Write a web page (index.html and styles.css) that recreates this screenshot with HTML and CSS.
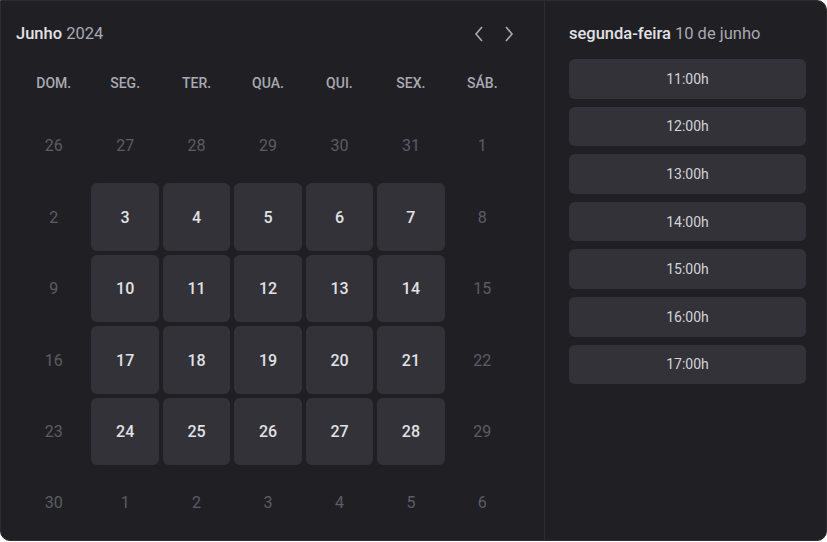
FILE: index.html
```html
<!DOCTYPE html>
<html lang="pt-BR">
<head>
<meta charset="utf-8">
<link rel="stylesheet" href="styles.css">
</head>
<body>
<div class="card">
  <section class="calendar">
    <header class="cal-header">
      <h2 class="cal-title">Junho <span>2024</span></h2>
      <div class="nav">
        <button class="nav-btn" aria-label="Anterior"><svg width="14" height="18" viewBox="0 0 14 18"><path d="M10 2 L4 9 L10 16" fill="none" stroke="currentColor" stroke-width="1.6"/></svg></button>
        <button class="nav-btn" aria-label="Próximo"><svg width="14" height="18" viewBox="0 0 14 18"><path d="M4 2 L10 9 L4 16" fill="none" stroke="currentColor" stroke-width="1.6"/></svg></button>
      </div>
    </header>
    <div class="weekdays">
      <span>DOM.</span><span>SEG.</span><span>TER.</span><span>QUA.</span><span>QUI.</span><span>SEX.</span><span>SÁB.</span>
    </div>
    <div class="days">
      <span class="day off">26</span><span class="day off">27</span><span class="day off">28</span><span class="day off">29</span><span class="day off">30</span><span class="day off">31</span><span class="day off">1</span>
      <span class="day off">2</span><span class="day on">3</span><span class="day on">4</span><span class="day on">5</span><span class="day on">6</span><span class="day on">7</span><span class="day off">8</span>
      <span class="day off">9</span><span class="day on">10</span><span class="day on">11</span><span class="day on">12</span><span class="day on">13</span><span class="day on">14</span><span class="day off">15</span>
      <span class="day off">16</span><span class="day on">17</span><span class="day on">18</span><span class="day on">19</span><span class="day on">20</span><span class="day on">21</span><span class="day off">22</span>
      <span class="day off">23</span><span class="day on">24</span><span class="day on">25</span><span class="day on">26</span><span class="day on">27</span><span class="day on">28</span><span class="day off">29</span>
      <span class="day off">30</span><span class="day off">1</span><span class="day off">2</span><span class="day off">3</span><span class="day off">4</span><span class="day off">5</span><span class="day off">6</span>
    </div>
  </section>
  <aside class="times">
    <h3 class="times-title">segunda-feira <span>10 de junho</span></h3>
    <div class="slots">
      <button class="slot">11:00h</button>
      <button class="slot">12:00h</button>
      <button class="slot">13:00h</button>
      <button class="slot">14:00h</button>
      <button class="slot">15:00h</button>
      <button class="slot">16:00h</button>
      <button class="slot">17:00h</button>
    </div>
  </aside>
</div>
</body>
</html>
```
FILE: styles.css
```css
* { box-sizing: border-box; }
html, body { margin: 0; padding: 0; }
body {
  background: #ffffff;
  font-family: Roboto, "Noto Sans", sans-serif;
  width: 827px;
  height: 542px;
  overflow: hidden;
}
.card {
  display: flex;
  width: 827px;
  height: 541px;
  background: #202024;
  border: 1px solid #2c2c31;
  border-radius: 0 10px 10px 10px;
  overflow: hidden;
}
.calendar {
  width: 544px;
  border-right: 1px solid #2c2c31;
  padding: 0 28px 0 19px;
  display: flex;
  flex-direction: column;
}
.cal-header {
  height: 65px;
  display: flex;
  align-items: center;
  justify-content: space-between;
  margin-left: -4px;
}
.cal-title {
  margin: 0;
  font-size: 16.5px;
  font-weight: 500;
  color: #e1e1e6;
}
.cal-title span { font-weight: 400; color: #a9a9b2; }
.nav { display: flex; gap: 16px; margin-right: 0; }
.nav-btn {
  background: none;
  border: 0;
  padding: 0;
  width: 14px;
  height: 18px;
  color: #a9a9b2;
  display: flex;
}
.weekdays {
  display: grid;
  grid-template-columns: repeat(7, 1fr);
  column-gap: 4px;
  height: 34px;
  align-items: center;
  margin-bottom: 12px;
}
.weekdays span {
  text-align: center;
  font-size: 14px;
  font-weight: 500;
  color: #a9a9b2;
}
.days {
  display: grid;
  grid-template-columns: repeat(7, 1fr);
  gap: 4px;
}
.day {
  aspect-ratio: 1 / 1;
  display: flex;
  align-items: center;
  justify-content: center;
  font-size: 16px;
  border-radius: 6px;
}
.day.off { color: #5c5c64; }
.day.on {
  background: #323238;
  color: #e1e1e6;
  font-weight: 500;
}
.times {
  flex: 1;
  padding: 0 20px 0 24px;
}
.times-title {
  margin: 0;
  height: 58px;
  display: flex;
  align-items: center;
  padding-top: 6px;
  font-size: 16.5px;
  font-weight: 500;
  color: #e1e1e6;
}
.times-title span { font-weight: 400; color: #a9a9b2; margin-left: 4px; }
.slots {
  display: flex;
  flex-direction: column;
  gap: 8px;
}
.slot {
  height: 39.6px;
  border: 0;
  border-radius: 6px;
  background: #323238;
  color: #d4d4da;
  font-family: Roboto, "Noto Sans", sans-serif;
  font-size: 14px;
}
```
